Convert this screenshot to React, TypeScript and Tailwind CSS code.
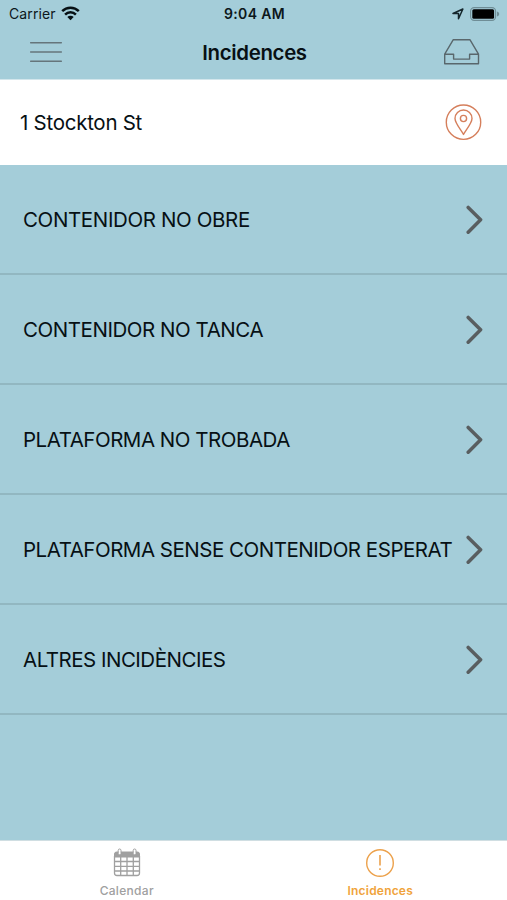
const rows = [
  { label: 'CONTENIDOR NO OBRE', spacing: 'tracking-[-0.37px]' },
  { label: 'CONTENIDOR NO TANCA', spacing: 'tracking-[-0.45px]' },
  { label: 'PLATAFORMA NO TROBADA', spacing: 'tracking-[-0.48px]' },
  { label: 'PLATAFORMA SENSE CONTENIDOR ESPERAT', spacing: 'tracking-[-0.48px]' },
  { label: 'ALTRES INCIDÈNCIES', spacing: 'tracking-[-0.5px]' },
];

function Wifi() {
  return (
    <svg width="19" height="15" viewBox="0 0 19 15" fill="none" stroke="#071014" strokeWidth="2.5">
      <path d="M1.2 5.2a11.7 11.7 0 0 1 16.6 0" />
      <path d="M4.1 8.6a7.6 7.6 0 0 1 10.8 0" />
      <path d="M6.3 11a4.5 4.5 0 0 1 6.4 0L9.5 14.2z" fill="#071014" stroke="none" />
    </svg>
  );
}

function StatusBar() {
  return (
    <div className="grid h-[27px] grid-cols-3 items-center pl-[9px] pr-[7px] text-[14px] text-[#0c171b]">
      <div className="flex items-center gap-[5px]">
        <span className="pb-px tracking-[0.12px]">Carrier</span>
        <Wifi />
      </div>
      <div className="pb-px text-center font-semibold tracking-[0.35px] whitespace-nowrap">9:04 AM</div>
      <div className="flex items-center justify-end gap-[6px]">
        <svg width="12" height="12" viewBox="0 0 12 12" fill="none" stroke="#15262c" strokeWidth="1.5" strokeLinejoin="round">
          <path d="M10.9 1 6.5 10.8V5.5H1z" />
        </svg>
        <svg width="30" height="14" viewBox="0 0 30 14">
          <rect x=".6" y=".6" width="25" height="12.8" rx="3.6" fill="none" stroke="#6f8d96" strokeWidth="1.1" />
          <rect x="2.3" y="2.3" width="21.8" height="9.4" rx="1.5" fill="#000" />
          <path d="M27 4.5c1.5.6 2.2 1.4 2.2 2.5s-.7 1.9-2.2 2.5z" fill="#6f8d96" />
        </svg>
      </div>
    </div>
  );
}

export default function App() {
  return (
    <div className="flex h-[900px] w-[507px] flex-col overflow-hidden bg-[#a4cdd9] font-['Inter','Liberation_Sans',sans-serif] text-[#071014]">
      <header className="h-[79px] shrink-0">
        <StatusBar />
        <div className="grid h-[50px] grid-cols-3 items-center pr-[27px] pl-[29px]">
          <svg width="34" height="24" viewBox="0 0 34 24" stroke="#65757b" strokeWidth="1.6" strokeLinecap="round">
            <path d="M1.7 2.7h30.6M1.7 12h30.6M1.7 21.3h30.6" />
          </svg>
          <h1 className="pt-[2px] text-center text-[20.4px] font-semibold tracking-[-0.32px]">Incidences</h1>
          <svg className="justify-self-end" width="37" height="28" viewBox="0 0 37 28" fill="none" stroke="#59676c" strokeWidth="1.4" strokeLinejoin="round">
            <path d="M1.7 16.2 10.3 1.7h16.6l8.6 14.5v9.6H1.7zM1.7 16.2h8.9v4.9h16v-4.9h8.9" />
          </svg>
        </div>
      </header>

      <section className="flex h-[86px] shrink-0 items-center justify-between border-t border-[#d3e6ec] bg-white pr-[25px] pb-px pl-[20px]">
        <span className="pt-[2px] text-[20.5px] tracking-[-0.27px]">1 Stockton St</span>
        <svg width="37" height="37" viewBox="0 0 37 37" fill="none" stroke="#d57f5c" strokeWidth="1.4">
          <circle cx="18.5" cy="18.2" r="17.2" />
          <path d="M18.5 30.4C15.8 25.7 10 19 10 14.5a8.5 8.5 0 0 1 17 0c0 4.5-5.8 11.2-8.5 15.9z" strokeLinejoin="round" />
          <circle cx="18.5" cy="14.5" r="3.1" />
        </svg>
      </section>

      <ul className="grow">
        {rows.map((row) => (
          <li key={row.label} className="flex h-[110px] items-center justify-between border-b-2 border-[#92b7c1] pt-[2px] pr-[23px] pl-[23px]">
            <span className={`text-[20.5px] whitespace-nowrap ${row.spacing}`}>{row.label}</span>
            <svg className="shrink-0" width="19" height="30" viewBox="0 0 19 30" fill="none" stroke="#595e60" strokeWidth="3.5" strokeLinecap="round" strokeLinejoin="round">
              <path d="M3.2 2.4 15.6 14.8 3.2 27.2" />
            </svg>
          </li>
        ))}
      </ul>

      <nav className="grid h-[60px] shrink-0 grid-cols-2 border-t border-[#d0dee2] bg-white text-[12px]">
        <div className="flex flex-col items-center text-[#a0a0a0]">
          <svg className="mt-[7px]" width="28" height="30" viewBox="0 0 28 30" fill="none" stroke="#a0a0a0">
            <path d="M1.5 9V6q0-2 2-2h21q2 0 2 2v3z" fill="#a0a0a0" />
            <path d="M1.5 8v17q0 2.5 2.5 2.5h20q2.5 0 2.5-2.5V8M1.5 13.5h25M1.5 18.3h25M1.5 23h25M7.7 9v18.5M14 9v18.5M20.3 9v18.5" strokeWidth="1.3" />
            <rect x="5.2" y="1" width="2.8" height="5.8" rx="1.4" fill="#fff" />
            <rect x="20.2" y="1" width="2.8" height="5.8" rx="1.4" fill="#fff" />
          </svg>
          <span className="mt-[5px] leading-[15px] font-medium tracking-[0.3px]">Calendar</span>
        </div>
        <div className="flex flex-col items-center text-[#f0a33b]">
          <svg className="mt-[7px]" width="30" height="30" viewBox="0 0 30 30" fill="none" stroke="#eca14b" strokeWidth="1.4">
            <circle cx="15" cy="15" r="13.3" />
            <path d="M15 7v10.5M15 20.3v1.8" strokeWidth="1.6" />
          </svg>
          <span className="mt-[5px] leading-[15px] font-semibold tracking-[0.2px]">Incidences</span>
        </div>
      </nav>
    </div>
  );
}
